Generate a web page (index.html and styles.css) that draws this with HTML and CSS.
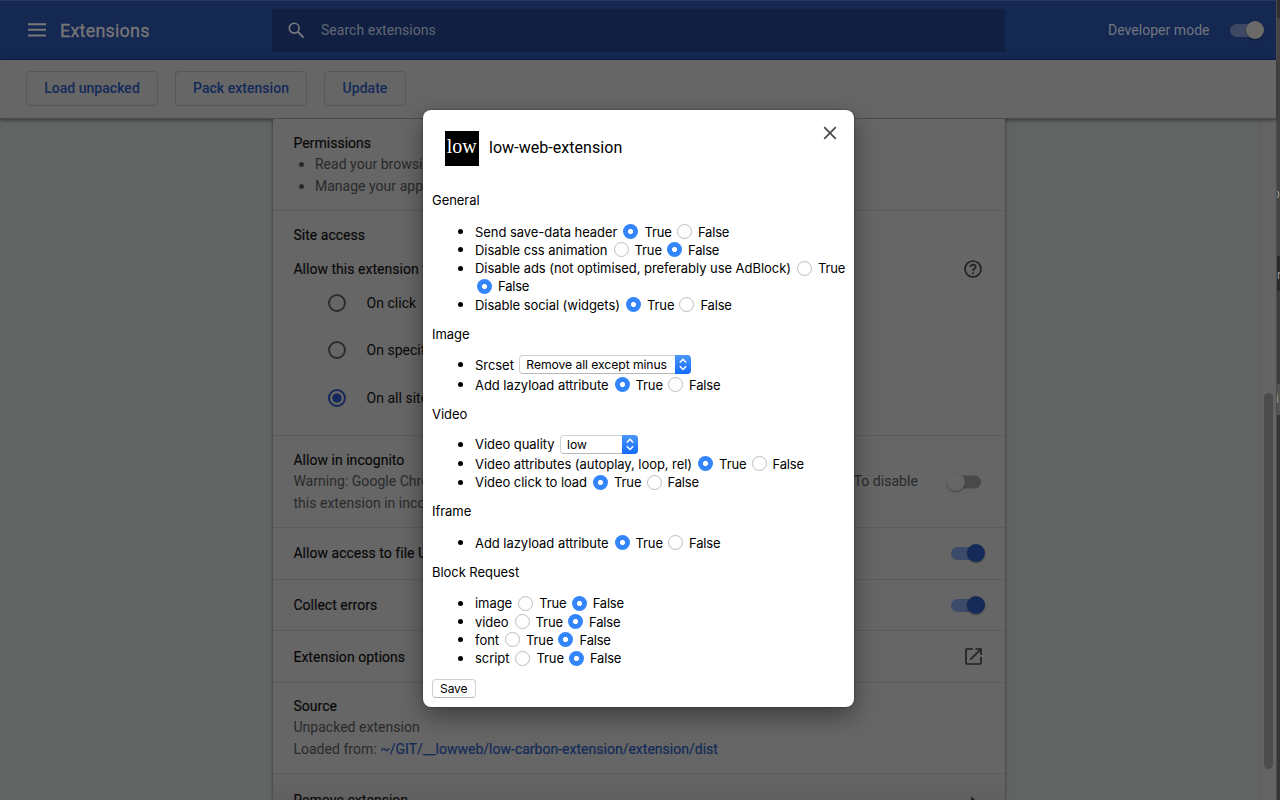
FILE: index.html
```html
<!DOCTYPE html>
<html lang="en">
<head>
<meta charset="utf-8">
<title>Extensions</title>
<link rel="stylesheet" href="styles.css">
</head>
<body>
<div class="screen">
  <div class="app">
    <header class="topbar">
      <svg class="menu" width="18" height="14" viewBox="0 0 18 14"><path d="M0 1.2h18M0 6.8h18M0 12.4h18" stroke="currentColor" stroke-width="2"/></svg>
      <h1>Extensions</h1>
      <div class="search">
        <svg width="17" height="17" viewBox="0 0 17 17" fill="none" stroke="currentColor"><circle cx="6.2" cy="6.2" r="4.9" stroke-width="1.6"/><path d="M9.9 9.9l5.7 5.7" stroke-width="2"/></svg>
        <span>Search extensions</span>
      </div>
      <span class="devmode">Developer mode</span>
      <span class="toggle light"><i></i></span>
    </header>
    <div class="toolbar">
      <button class="b1">Load unpacked</button><button class="b2">Pack extension</button><button class="b3">Update</button>
    </div>
    <div class="body">
      <main class="card">
        <section class="permissions">
          <h2>Permissions</h2>
          <ul><li>Read your browsing</li><li>Manage your apps</li></ul>
        </section>
        <section class="access">
          <h2>Site access</h2>
          <div class="allow"><span>Allow this extension to</span>
            <svg width="18" height="18" viewBox="0 0 18 18" fill="none" stroke="currentColor" stroke-width="1.7"><circle cx="9" cy="9" r="8"/><path d="M6.4 7.1c0-1.5 1.1-2.5 2.6-2.5s2.6 1 2.6 2.3c0 1.8-2.6 1.9-2.6 4"/><path d="M9 12.2v1.8"/></svg>
          </div>
          <div class="option o1"><span class="ring"></span>On click</div>
          <div class="option o2"><span class="ring"></span>On specific sites</div>
          <div class="option o3"><span class="ring on"></span>On all sites</div>
        </section>
        <section class="incognito">
          <div><h2>Allow in incognito</h2>
          <p class="warn"><span>Warning: Google Chrome</span><span>To disable</span></p>
          <p>this extension in incognito</p></div>
          <span class="toggle off"><i></i></span>
        </section>
        <section class="row"><h2>Allow access to file URLs</h2><span class="toggle"><i></i></span></section>
        <section class="row"><h2>Collect errors</h2><span class="toggle"><i></i></span></section>
        <section class="row"><h2>Extension options</h2>
          <svg width="17" height="17" viewBox="0 0 17 17" fill="none" stroke="currentColor" stroke-width="1.7"><path d="M8 1H1.9Q1 1 1 1.9V15.1Q1 16 1.9 16H15.1Q16 16 16 15.1V9M10.5 1H16V6.7M16 1L5.3 11.7"/></svg>
        </section>
        <section class="source">
          <h2>Source</h2><p>Unpacked extension</p>
          <p>Loaded from: <a>~/GIT/__lowweb/low-carbon-extension/extension/dist</a></p>
        </section>
        <section class="remove"><h2>Remove extension</h2><svg width="6" height="10" viewBox="0 0 6 10"><path d="M0 0l5 5-5 5z" fill="currentColor"/></svg></section>
      </main>
      <div class="scroll"><div class="thumb"></div></div>
    </div>
  </div>
  <aside class="edge"><span class="e1">p</span><span class="e2">r</span><span class="e3">ri</span></aside>

  <div class="dialog">
    <div class="head">
      <div class="logo">low</div><div class="name">low-web-extension</div>
      <svg class="close" width="14" height="14" viewBox="0 0 14 14"><path d="M1.2 1.2l11.6 11.6M12.8 1.2L1.2 12.8" stroke="currentColor" stroke-width="1.7"/></svg>
    </div>
    <h3>General</h3>
    <ul>
      <li><span>Send save-data header</span><i class="radio on"></i><b>True</b><i class="radio"></i><em>False</em></li>
      <li><span>Disable css animation</span><i class="radio"></i><b>True</b><i class="radio on"></i><em>False</em></li>
      <li><span>Disable ads (not optimised, preferably use AdBlock)</span><i class="radio"></i><b>True</b></li>
      <li class="cont"><i class="radio on"></i><em>False</em></li>
      <li><span>Disable social (widgets)</span><i class="radio on"></i><b>True</b><i class="radio"></i><em>False</em></li>
    </ul>
    <h3>Image</h3>
    <ul class="sel">
      <li class="pick"><span>Srcset</span><div class="select wide">Remove all except minus<svg width="16" height="19" viewBox="0 0 16 19"><path d="M4.8 7.5L8 4.3l3.2 3.2M4.8 11.3L8 14.5l3.2-3.2" fill="none" stroke="#fff" stroke-width="1.5"/></svg></div></li>
      <li><span>Add lazyload attribute</span><i class="radio on"></i><b>True</b><i class="radio"></i><em>False</em></li>
    </ul>
    <h3>Video</h3>
    <ul class="sel">
      <li class="pick"><span>Video quality</span><div class="select small">low<svg width="16" height="19" viewBox="0 0 16 19"><path d="M4.8 7.5L8 4.3l3.2 3.2M4.8 11.3L8 14.5l3.2-3.2" fill="none" stroke="#fff" stroke-width="1.5"/></svg></div></li>
      <li><span>Video attributes (autoplay, loop, rel)</span><i class="radio on"></i><b>True</b><i class="radio"></i><em>False</em></li>
      <li><span>Video click to load</span><i class="radio on"></i><b>True</b><i class="radio"></i><em>False</em></li>
    </ul>
    <h3>Iframe</h3>
    <ul>
      <li><span>Add lazyload attribute</span><i class="radio on"></i><b>True</b><i class="radio"></i><em>False</em></li>
    </ul>
    <h3>Block Request</h3>
    <ul>
      <li><span>image</span><i class="radio"></i><b>True</b><i class="radio on"></i><em>False</em></li>
      <li><span>video</span><i class="radio"></i><b>True</b><i class="radio on"></i><em>False</em></li>
      <li><span>font</span><i class="radio"></i><b>True</b><i class="radio on"></i><em>False</em></li>
      <li><span>script</span><i class="radio"></i><b>True</b><i class="radio on"></i><em>False</em></li>
    </ul>
    <button class="save">Save</button>
  </div>
</div>
</body>
</html>
```

FILE: styles.css
```css
* { box-sizing: border-box; }
body, h1, h2, h3, p, ul { margin: 0; padding: 0; }
body { font-family: Roboto, sans-serif; font-size: 14px; letter-spacing: .03px; }
ul { list-style: none; }
.screen { position: relative; width: 1280px; height: 800px; display: flex; overflow: hidden; }
.app { width: 1276px; height: 800px; display: flex; flex-direction: column; }
.topbar { height: 60px; flex: none; background: #152852; border-top: 1px solid #26375d; border-bottom: 1px solid #0c2050; color: #777a80; display: flex; align-items: center; padding-left: 28px; }
.menu { color: #777; }
.topbar h1 { font-size: 18px; font-weight: 400; -webkit-text-stroke: .3px; letter-spacing: .2px; margin-left: 14px; width: 212px; color: #777; }
.search { width: 733px; height: 43px; background: #101f42; border-radius: 2px; display: flex; align-items: center; padding-left: 16px; gap: 16px; color: #626875; }
.search svg { color: #7a7c80; }
.devmode { margin-left: 103px; width: 122px; color: #717680; }
.toggle { position: relative; display: block; width: 34px; height: 18px; flex: none; }
.toggle::before { content: ""; display: block; width: 30px; height: 13px; margin: 2.5px 0 0; border-radius: 7px; background: #3d4b6a; }
.toggle i { position: absolute; right: 0; top: 0; width: 18px; height: 18px; border-radius: 50%; background: #152a58; box-shadow: 0 1px 2px rgba(0,0,0,.35); }
.toggle.light::before { background: #3e4862; }
.toggle.light i { background: #6a6a68; }
.toggle.off::before { background: #494949; margin-left: 4px; }
.toggle.off i { right: auto; left: 0; background: #666; }
.toggle.off::before, .incognito .toggle::before { margin-top: 0; }
.toolbar { height: 59px; flex: none; background: #666; border-bottom: 1px solid #4c4c4c; display: flex; align-items: flex-start; padding: 11px 26px; box-shadow: 0 1px 4px rgba(0,0,0,.5); position: relative; }
.toolbar button { height: 35px; border: 1px solid #565759; border-radius: 4px; background: none; color: #132a59; font: 500 14px Roboto, sans-serif; letter-spacing: .03px; padding: 0 0 2px; }
.b1 { width: 132px; } .b2 { width: 132px; margin: 0 17px; } .b3 { width: 82px; }
.body { flex: 1; min-height: 0; background: #616463; display: flex; justify-content: space-between; padding-left: 273px; }
.card { width: 732px; background: #666; color: #090909; box-shadow: 0 0 3px rgba(0,0,0,.5); clip-path: inset(0 -4px); height: 681px; overflow: hidden; }
.card h2 { font-size: 14px; font-weight: 400; line-height: 22px; color: #080808; -webkit-text-stroke: .15px; }
.card p, .card li { line-height: 21.6px; color: #292a2c; white-space: nowrap; }
.card section { border-bottom: 1px solid #5c5c5c; padding: 0 20.4px; }
.card .permissions { height: 92px; padding-top: 13px; }
.permissions li { padding-left: 21.5px; display: flex; align-items: center; }
.permissions li::before { content: ""; width: 5px; height: 5px; border-radius: 50%; background: #292a2c; margin: 0 10.5px 0 -15.5px; }
.card .access { height: 225px; padding-top: 13px; }
.allow { display: flex; align-items: center; justify-content: space-between; height: 22px; margin-top: 12px; padding-right: 3px; }
.allow span { white-space: nowrap; -webkit-text-stroke: .15px; }
.card svg { color: #222; }
.option { display: flex; align-items: center; height: 22px; padding-left: 34.6px; }
.o1 { margin-top: 12px; } .o2 { margin-top: 25px; } .o3 { margin-top: 26px; }
.ring { width: 18px; height: 18px; border: 2px solid #2c2d2f; border-radius: 50%; margin-right: 20.5px; }
.ring.on { border-color: #14295a; background: radial-gradient(circle, #14295a 0 4.3px, transparent 4.9px); }
.card .incognito { height: 92px; padding-top: 13px; display: flex; justify-content: space-between; padding-right: 24.5px; }
.incognito .toggle { margin-top: 24px; }
.incognito .toggle::before { transform: translateY(2.5px); }
.warn { width: 624.5px; display: flex; justify-content: space-between; }
.card .row { height: 51.7px; display: flex; align-items: center; justify-content: space-between; }
.row svg { margin-right: 3px; }
.card .source { height: 91px; padding-top: 12px; }
.source p { position: relative; }
.source a { color: #132a59; -webkit-text-stroke: .2px; letter-spacing: .01px; }
.card .remove { height: 60px; padding: 15px 28px 0 20.4px; display: flex; justify-content: space-between; background: linear-gradient(#656565, #606060 26px); }
.remove svg { margin-top: 7px; }
.scroll { width: 16px; background: #646464; border-left: 1px solid #5a5a5a; padding: 274px 0 0 3px; }
.thumb { width: 9px; height: 376px; border-radius: 5px; background: #4c4c4c; }
.edge { width: 4px; background: #3a3a38; border-left: 1px solid #4d4d4c; overflow: hidden; color: #999; font-size: 12px; letter-spacing: -1px; background-image: linear-gradient(#303030 0 18px, #454442 18px 256px, #292929 256px 291px, #3e3d3b 291px 384px, #545452 384px 415px, #353533 415px); }
.edge span { display: block; }
.edge .e1, .edge .e3 { text-indent: -4px; }
.e1 { padding-top: 187px; } .e2 { padding-top: 67px; } .e3 { padding-top: 110px; }

.dialog { position: absolute; left: 423px; top: 110px; width: 431px; height: 596.5px; background: #fff; border-radius: 8px; box-shadow: 0 0 2px rgba(0,0,0,.5), 0 9px 24px rgba(0,0,0,.4); padding: 21.4px 9px 0; font-family: Inter, sans-serif; font-size: 13px; letter-spacing: -.05px; color: #000; }
.head { display: flex; height: 60px; padding-left: 13px; align-items: flex-start; }
.logo { width: 34.5px; height: 34.5px; margin-left: -.5px; background: #000; color: #fff; font: 20px/31px "Liberation Serif", serif; text-align: center; }
.name { font: 16px/34px Roboto, sans-serif; letter-spacing: .05px; margin-left: 10px; width: 334px; }
.head .close { margin-top: -5px; color: #47494d; }
.dialog h3 { font-size: 13px; line-height: 18px; font-weight: 400; }
.dialog ul { margin: 13px 0 11.6px; padding-left: 43px; }
.dialog ul.sel { margin: 11px 0; }
.dialog li { display: flex; align-items: center; height: 18.3px; white-space: nowrap; }
.dialog li::before { content: ""; width: 5px; height: 5px; border-radius: 50%; background: #000; margin: 0 12px 0 -17px; flex: none; }
.dialog li.cont::before { width: 0; margin: 0 2px 0 0; }
.dialog li.cont .radio { margin-left: 0; }
.dialog li.pick { height: 21px; }
.dialog b, .dialog em { font-weight: 400; font-style: normal; }
.dialog b { width: 26.5px; letter-spacing: -.1px; }
.dialog em { letter-spacing: -.2px; }
.radio { width: 15px; height: 15px; flex: none; border-radius: 50%; border: 1px solid #bdbdbd; margin: 0 6px; background: #fff; }
.radio.on { border: 0; background: radial-gradient(circle, #fff 0 2.2px, #3385fb 2.9px); }
.select { height: 19px; margin-left: 5px; border: 1px solid #d2d2d2; border-bottom-color: #b8b8b8; border-radius: 4px; display: flex; align-items: center; justify-content: space-between; padding-left: 6.5px; font-size: 12.2px; letter-spacing: -.08px; }
.select svg { flex: none; margin-right: -1px; border-radius: 0 4px 4px 0; background: linear-gradient(#4c97fc, #126bfb); }
.wide { width: 172px; } .small { width: 78px; }
.save { display: block; margin-top: 12px; width: 43.5px; height: 19px; border: 1px solid #d0d0d0; border-bottom-color: #b8b8b8; border-radius: 4px; background: #fff; color: #000; font: 12px Inter, sans-serif; letter-spacing: -.1px; padding: 0; }
```
